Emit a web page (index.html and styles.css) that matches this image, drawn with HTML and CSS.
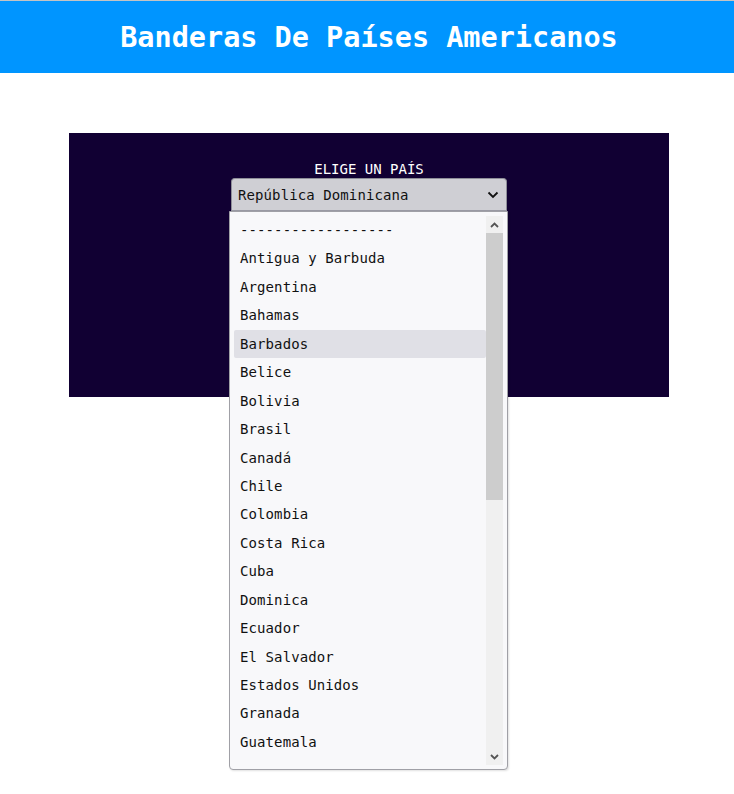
FILE: index.html
```html
<!DOCTYPE html>
<html lang="es">
<head>
<meta charset="utf-8">
<title>Banderas De Países Americanos</title>
<link rel="stylesheet" href="styles.css">
</head>
<body>
<header class="top">
  <h1 class="title">Banderas De Países Americanos</h1>
</header>
<div class="page">
  <section class="panel">
    <p class="label">ELIGE UN PAÍS</p>
    <div class="picker">
      <div class="select">
        <span class="select-text">República Dominicana</span>
        <svg class="chev" width="12" height="8" viewBox="0 0 12 8"><path d="M1.5 1.5 L6 6 L10.5 1.5" fill="none" stroke="#111" stroke-width="1.8"/></svg>
      </div>
      <div class="dropdown">
        <ul class="options">
          <li class="opt">------------------</li>
          <li class="opt">Antigua y Barbuda</li>
          <li class="opt">Argentina</li>
          <li class="opt">Bahamas</li>
          <li class="opt opt-hover">Barbados</li>
          <li class="opt">Belice</li>
          <li class="opt">Bolivia</li>
          <li class="opt">Brasil</li>
          <li class="opt">Canadá</li>
          <li class="opt">Chile</li>
          <li class="opt">Colombia</li>
          <li class="opt">Costa Rica</li>
          <li class="opt">Cuba</li>
          <li class="opt">Dominica</li>
          <li class="opt">Ecuador</li>
          <li class="opt">El Salvador</li>
          <li class="opt">Estados Unidos</li>
          <li class="opt">Granada</li>
          <li class="opt">Guatemala</li>
          <li class="opt">Guyana</li>
        </ul>
        <div class="scrollbar">
          <div class="sb-btn">
            <svg width="9" height="6" viewBox="0 0 9 6"><path d="M1 5 L4.5 1.5 L8 5" fill="none" stroke="#555" stroke-width="1.8"/></svg>
          </div>
          <div class="sb-track">
            <div class="sb-thumb"></div>
          </div>
          <div class="sb-btn">
            <svg width="9" height="6" viewBox="0 0 9 6"><path d="M1 1 L4.5 4.5 L8 1" fill="none" stroke="#555" stroke-width="1.8"/></svg>
          </div>
        </div>
      </div>
    </div>
  </section>
</div>
</body>
</html>
```
FILE: styles.css
```css
* { box-sizing: border-box; }

html, body {
  margin: 0;
  padding: 0;
  background: #ffffff;
}

body {
  font-family: "DejaVu Sans Mono", "Liberation Mono", monospace;
  min-height: 794px;
}

.top {
  background: #0095ff;
  height: 73px;
  border-top: 1px solid #c4c4c4;
  display: flex;
  align-items: center;
  justify-content: center;
  padding-left: 4px;
  padding-top: 2px;
}

.title {
  margin: 0;
  color: #ffffff;
  font-size: 28.5px;
  font-weight: bold;
  line-height: 36px;
}

.page {
  padding-left: 4px;
  padding-top: 60px;
}

.panel {
  width: 600px;
  height: 264px;
  margin: 0 auto;
  background: #110033;
  padding-top: 28px;
  display: flex;
  flex-direction: column;
  align-items: center;
}

.label {
  margin: 0;
  color: #ffffff;
  font-size: 14px;
  line-height: 17px;
}

.picker {
  position: relative;
  width: 279px;
  margin-right: 1px;
}

.select {
  margin: 0 1px 0 2px;
  height: 33px;
  background: #cfcfd4;
  border: 1px solid #8e8e98;
  border-bottom-color: #9a9aa4;
  border-radius: 4px 4px 0 0;
  display: flex;
  align-items: center;
  justify-content: space-between;
  padding: 0 7px 0 6px;
  color: #111111;
  font-size: 14px;
  letter-spacing: 0.1px;
}

.chev { display: block; }

.dropdown {
  position: absolute;
  left: 0;
  top: 33px;
  width: 279px;
  height: 559px;
  background: #f8f8fa;
  border: 1px solid #a0a0a6;
  border-radius: 0 0 4px 4px;
  padding: 4px;
  display: flex;
  box-shadow: 1px 1px 2px rgba(0, 0, 0, 0.12);
}

.options {
  list-style: none;
  margin: 0;
  padding: 0;
  flex: 1;
  overflow: hidden;
}

.opt {
  height: 28.44px;
  line-height: 28.44px;
  padding-left: 6px;
  font-size: 14px;
  color: #111111;
  white-space: nowrap;
  letter-spacing: 0.1px;
}

.opt-hover {
  background: #e0e0e6;
  border-radius: 2px;
}

.scrollbar {
  width: 17px;
  display: flex;
  flex-direction: column;
  background: #f0f0f0;
}

.sb-btn {
  height: 17px;
  display: flex;
  align-items: center;
  justify-content: center;
}

.sb-btn svg { display: block; }

.sb-track {
  flex: 1;
}

.sb-thumb {
  height: 267px;
  background: #cdcdcd;
}
```
